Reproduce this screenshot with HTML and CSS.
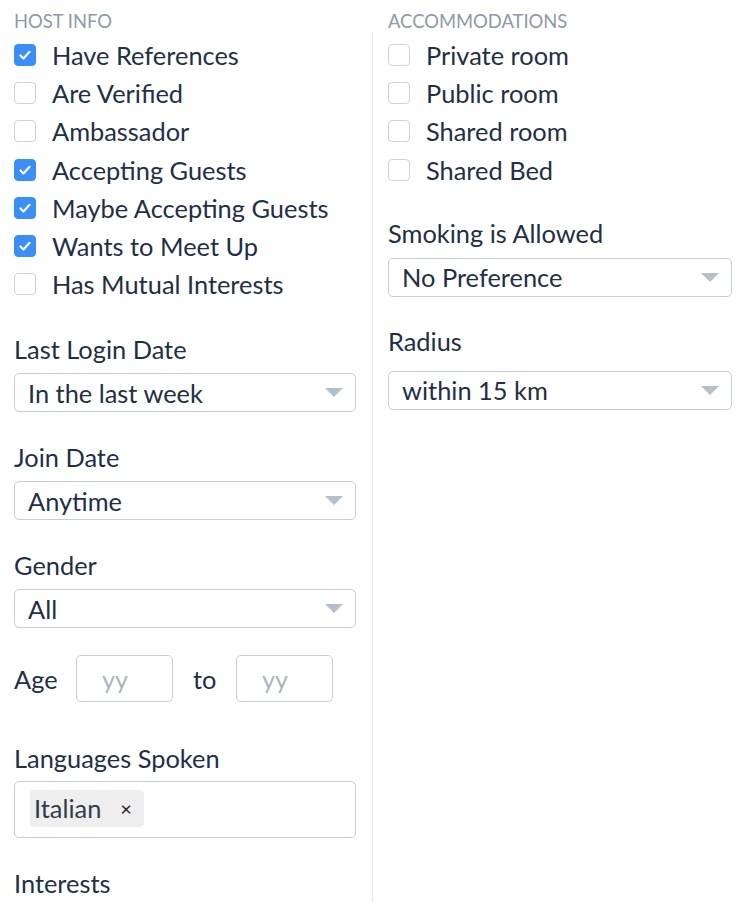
FILE: index.html
```html
<!DOCTYPE html>
<html>
<head>
<meta charset="utf-8">
<link rel="stylesheet" href="styles.css">
</head>
<body>
<div class="page">
  <div class="col col-left">
    <div class="heading">Host Info</div>
    <div class="checks">
      <div class="check-row"><span class="box checked"><svg viewBox="0 0 22 22"><path d="M6 11.5l3.3 3.3L16 7.5"/></svg></span><span>Have References</span></div>
      <div class="check-row"><span class="box"></span><span>Are Verified</span></div>
      <div class="check-row"><span class="box"></span><span>Ambassador</span></div>
      <div class="check-row"><span class="box checked"><svg viewBox="0 0 22 22"><path d="M6 11.5l3.3 3.3L16 7.5"/></svg></span><span>Accepting Guests</span></div>
      <div class="check-row"><span class="box checked"><svg viewBox="0 0 22 22"><path d="M6 11.5l3.3 3.3L16 7.5"/></svg></span><span>Maybe Accepting Guests</span></div>
      <div class="check-row"><span class="box checked"><svg viewBox="0 0 22 22"><path d="M6 11.5l3.3 3.3L16 7.5"/></svg></span><span>Wants to Meet Up</span></div>
      <div class="check-row"><span class="box"></span><span>Has Mutual Interests</span></div>
    </div>

    <div class="field">
      <div class="label">Last Login Date</div>
      <div class="select"><span>In the last week</span><span class="arrow"></span></div>
    </div>
    <div class="field">
      <div class="label">Join Date</div>
      <div class="select"><span>Anytime</span><span class="arrow"></span></div>
    </div>
    <div class="field">
      <div class="label">Gender</div>
      <div class="select"><span>All</span><span class="arrow"></span></div>
    </div>

    <div class="age-row">
      <span class="age-label">Age</span>
      <div class="age-input">yy</div>
      <span class="age-to">to</span>
      <div class="age-input">yy</div>
    </div>

    <div class="field field-lang">
      <div class="label">Languages Spoken</div>
      <div class="tags-box"><span class="tag">Italian<span class="tag-x">×</span></span></div>
    </div>

    <div class="field">
      <div class="label">Interests</div>
    </div>
  </div>

  <div class="col col-right">
    <div class="heading">Accommodations</div>
    <div class="checks">
      <div class="check-row"><span class="box"></span><span>Private room</span></div>
      <div class="check-row"><span class="box"></span><span>Public room</span></div>
      <div class="check-row"><span class="box"></span><span>Shared room</span></div>
      <div class="check-row"><span class="box"></span><span>Shared Bed</span></div>
    </div>
    <div class="field field-smoking">
      <div class="label">Smoking is Allowed</div>
      <div class="select"><span>No Preference</span><span class="arrow"></span></div>
    </div>
    <div class="field field-radius">
      <div class="label">Radius</div>
      <div class="select"><span>within 15 km</span><span class="arrow"></span></div>
    </div>
  </div>
</div>
</body>
</html>
```

FILE: styles.css
```css
* { box-sizing: border-box; }
html, body { margin: 0; padding: 0; background: #fff; }
body {
  font-family: Lato, "Noto Sans", sans-serif;
  color: #1f2f45;
  height: 902px;
  overflow: hidden;
}
.page {
  display: grid;
  grid-template-columns: 372px 1fr;
  height: 902px;
}
.col { display: flex; flex-direction: column; }
.col > * { flex: none; }
.col-left { padding: 10px 16px 0 14px; }
.col-right {
  padding: 10px 8px 0 16px;
  position: relative;
}
.col-right::before {
  content: "";
  position: absolute;
  left: 0;
  top: 32px;
  bottom: 0;
  width: 1px;
  background: #e4eaef;
}
.heading {
  font-size: 18.4px;
  line-height: 22px;
  text-transform: uppercase;
  color: #8c9aab;
}
.checks {
  display: flex;
  flex-direction: column;
  margin-top: 4px;
  margin-bottom: 1px;
}
.check-row {
  display: flex;
  align-items: center;
  gap: 16px;
  height: 38.2px;
  font-size: 25.4px;
}
.box {
  width: 22px;
  height: 22px;
  border: 1.5px solid #d2d2d2;
  border-radius: 4px;
  flex: none;
  display: flex;
  align-items: center;
  justify-content: center;
  background: #fff;
}
.box.checked {
  background: #3b8ef6;
  border-color: #3b8ef6;
}
.box svg {
  width: 22px;
  height: 22px;
  fill: none;
  stroke: #fff;
  stroke-width: 2.4;
  stroke-linecap: round;
  stroke-linejoin: round;
}
.field { margin-top: 30px; display: flex; flex-direction: column; }
.field > * { flex: none; }
.label {
  font-size: 25.4px;
  line-height: 30px;
}
.select {
  margin-top: 9px;
  height: 39px;
  border: 1.5px solid #c4cfd9;
  border-radius: 5px;
  display: flex;
  align-items: center;
  justify-content: space-between;
  padding: 0 12px 0 13px;
  font-size: 25.4px;
}
.field-smoking { margin-top: 28px; }
.field-smoking .select { margin-top: 10px; }
.field-radius { margin-top: 29px; }
.field-radius .select { margin-top: 15px; }
.arrow {
  width: 0;
  height: 0;
  border-left: 9px solid transparent;
  border-right: 9px solid transparent;
  border-top: 9px solid #b3bfca;
}
.age-row {
  margin-top: 27px;
  display: flex;
  align-items: center;
  font-size: 25.4px;
  height: 47px;
}
.age-label { width: 62px; }
.age-input {
  width: 97px;
  height: 47px;
  border: 1.5px solid #c4cfd9;
  border-radius: 5px;
  color: #abb5bf;
  padding-left: 25px;
  display: flex;
  align-items: center;
}
.age-to { width: 63px; padding-left: 20px; }
.field-lang { margin-top: 41px; }
.field-lang .tags-box { margin-top: 8px; }
.tags-box {
  height: 57px;
  border: 1.5px solid #c4cfd9;
  border-radius: 5px;
  padding: 7.5px 15px 0;
  display: flex;
  align-items: flex-start;
}
.tag {
  background: #eeeeee;
  border-radius: 4px;
  height: 37px;
  display: flex;
  align-items: center;
  padding: 0 12px 0 4px;
  font-size: 25.4px;
  color: #333d47;
}
.tag-x {
  font-size: 20px;
  margin-left: 19px;
  color: #222;
}
```
